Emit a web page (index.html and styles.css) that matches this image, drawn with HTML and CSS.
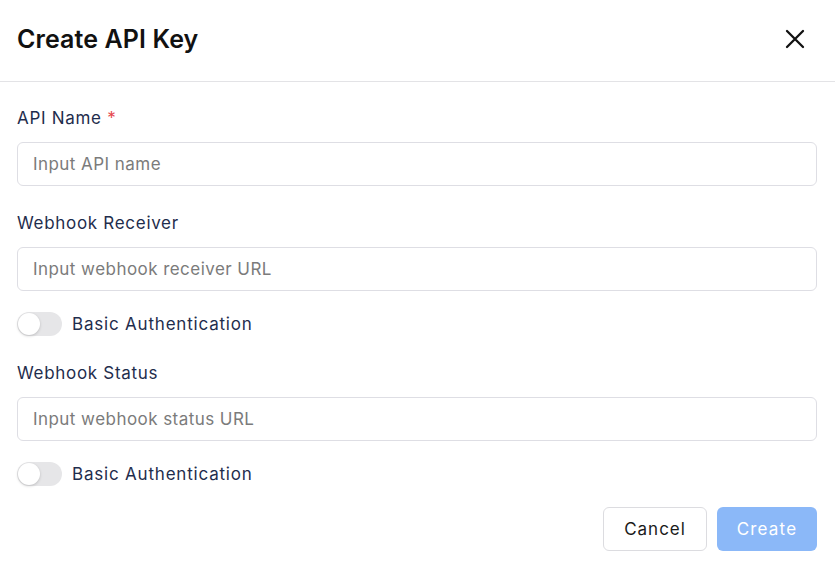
FILE: index.html
```html
<!DOCTYPE html>
<html lang="en">
<head>
<meta charset="utf-8">
<title>Create API Key</title>
<link rel="stylesheet" href="styles.css">
</head>
<body>
<div class="modal">
  <div class="header">
    <h1 class="title">Create API Key</h1>
    <button class="close" aria-label="Close">
      <svg width="20" height="20" viewBox="0 0 20 20"><path d="M2 2 L18 18 M18 2 L2 18" stroke="#111" stroke-width="2.3" stroke-linecap="round" fill="none"/></svg>
    </button>
  </div>
  <div class="body">
    <div class="field">
      <label class="label">API Name <span class="req">*</span></label>
      <input class="input" type="text" placeholder="Input API name">
    </div>
    <div class="field">
      <label class="label">Webhook Receiver</label>
      <input class="input" type="text" placeholder="Input webhook receiver URL">
    </div>
    <div class="toggle-row">
      <span class="toggle"><span class="knob"></span></span>
      <span class="toggle-label">Basic Authentication</span>
    </div>
    <div class="field">
      <label class="label">Webhook Status</label>
      <input class="input" type="text" placeholder="Input webhook status URL">
    </div>
    <div class="toggle-row">
      <span class="toggle"><span class="knob"></span></span>
      <span class="toggle-label">Basic Authentication</span>
    </div>
    <div class="actions">
      <button class="btn btn-cancel">Cancel</button>
      <button class="btn btn-create">Create</button>
    </div>
  </div>
</div>
</body>
</html>
```
FILE: styles.css
```css
* { box-sizing: border-box; }
html, body { margin: 0; padding: 0; background: #fff; }
body { font-family: "Inter", "Noto Sans", sans-serif; color: #1f2d4d; }

.modal { width: 835px; height: 569px; background: #fff; }

.header {
  height: 82px;
  border-bottom: 1px solid #e3e3e6;
  display: flex;
  align-items: center;
  justify-content: space-between;
  padding: 0 30px 4px 17px;
}
.title {
  margin: 0;
  font-size: 25px;
  font-weight: 600;
  color: #111;
  letter-spacing: 0.1px;
}
.close {
  border: 0;
  background: none;
  padding: 0;
  width: 20px;
  height: 20px;
  display: flex;
  cursor: pointer;
}

.body {
  padding: 24px 18px 0 17px;
  display: flex;
  flex-direction: column;
}

.field { display: flex; flex-direction: column; }
.field + .field, .toggle-row + .field { margin-top: 25px; }

.label {
  font-size: 17px;
  line-height: 24px;
  color: #1f2d4d;
  letter-spacing: 0.7px;
  margin-bottom: 12px;
}
.req { color: #e5484d; }

.input {
  height: 44px;
  border: 1px solid #dedee4;
  border-radius: 6px;
  padding: 0 15px;
  font-family: inherit;
  font-size: 17px;
  letter-spacing: 0.45px;
  color: #222;
  outline: none;
  background: #fff;
}
.input::placeholder { color: #7b7b7b; }

.toggle-row {
  margin-top: 21px;
  height: 24px;
  display: flex;
  align-items: center;
  gap: 10px;
}
.toggle {
  width: 45px;
  height: 24px;
  border-radius: 12px;
  background: #e6e6e8;
  position: relative;
  display: inline-block;
}
.knob {
  position: absolute;
  left: 1px;
  top: 1px;
  width: 22px;
  height: 22px;
  border-radius: 50%;
  background: #fff;
  box-shadow: 0 1px 3px rgba(0,0,0,0.18);
}
.toggle-label { font-size: 17px; letter-spacing: 0.8px; color: #1f2d4d; }

.actions {
  margin-top: 21px;
  display: flex;
  justify-content: flex-end;
  gap: 10px;
}
.btn {
  height: 44px;
  border-radius: 6px;
  font-family: inherit;
  font-size: 17px;
  letter-spacing: 1px;
  cursor: pointer;
}
.btn-cancel {
  width: 104px;
  background: #fff;
  border: 1px solid #dcdce0;
  color: #1a1a1a;
}
.btn-create {
  width: 100px;
  background: #8bb8f8;
  border: 0;
  color: #fff;
  letter-spacing: 1.2px;
}
```
